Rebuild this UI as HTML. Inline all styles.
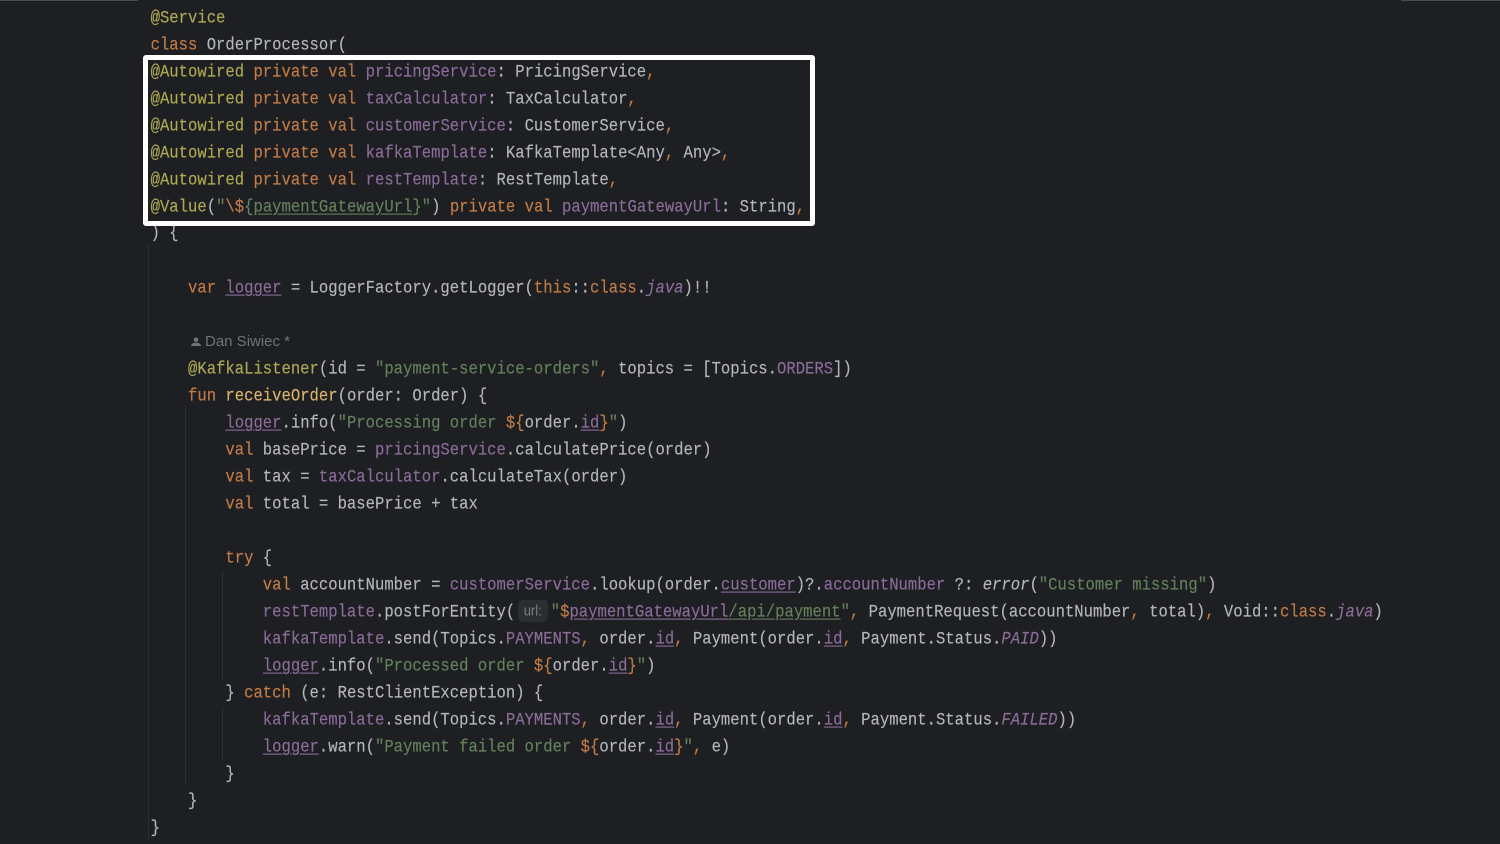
<!DOCTYPE html>
<html><head><meta charset="utf-8"><style>
html,body{margin:0;padding:0;width:1500px;height:844px;overflow:hidden;background:#1e1f22}
body{position:relative}
.bar{position:absolute;top:0;height:1px;background:#4a4b4f}
.g{position:absolute;width:1px;background:#2c2e32}
#code{position:absolute;left:0;top:0;width:1500px;height:844px;overflow:hidden;filter:blur(.35px)}
.l{position:absolute;margin-top:1px;margin-left:-.4px;white-space:pre;font:15.58px/27px "Liberation Mono",monospace;color:#b4b6bc;height:27px;transform:scaleY(1.1);transform-origin:center;-webkit-text-stroke:.15px currentColor}
.k{color:#c07c45}.a{color:#aca94f}.p{color:#8a6c99}.s{color:#64805c}.c{color:#c07c45}
.f{color:#d9b36c}.u{text-decoration:underline;text-underline-offset:2px}.i{font-style:italic}
.box{position:absolute;left:143px;top:55px;width:662px;height:161px;border:5px solid #fff;border-radius:3px}
.hint{display:inline-block;width:35.5px;height:22px;position:relative;vertical-align:top}
.hint b{position:absolute;left:2.5px;top:2px;width:30px;height:20px;background:#2b2d30;border-radius:4px;color:#7a7e85;font:400 13px/20px "Liberation Sans",sans-serif;text-align:center;-webkit-text-stroke:0}
.auth{position:absolute;left:205px;top:332px;font:15px/20px "Liberation Sans",sans-serif;color:#6f737a;white-space:pre}
</style></head><body>
<div class="bar" style="left:0;width:138px"></div>
<div class="bar" style="left:1401px;width:99px"></div>
<div class="g" style="left:148px;top:245px;height:595px"></div>
<div class="g" style="left:185px;top:405px;height:380px"></div>
<div class="g" style="left:222px;top:571px;height:109px"></div>
<div class="g" style="left:222px;top:706px;height:54px"></div>
<div id="code">
<div class="l" style="left:151px;top:4px"><span class="a">@Service</span></div>
<div class="l" style="left:151px;top:31px"><span class="k">class</span> OrderProcessor(</div>
<div class="l" style="left:151px;top:58px"><span class="a">@Autowired</span> <span class="k">private val</span> <span class="p">pricingService</span>: PricingService<span class="c">,</span></div>
<div class="l" style="left:151px;top:85px"><span class="a">@Autowired</span> <span class="k">private val</span> <span class="p">taxCalculator</span>: TaxCalculator<span class="c">,</span></div>
<div class="l" style="left:151px;top:112px"><span class="a">@Autowired</span> <span class="k">private val</span> <span class="p">customerService</span>: CustomerService<span class="c">,</span></div>
<div class="l" style="left:151px;top:139px"><span class="a">@Autowired</span> <span class="k">private val</span> <span class="p">kafkaTemplate</span>: KafkaTemplate&lt;Any<span class="c">,</span> Any&gt;<span class="c">,</span></div>
<div class="l" style="left:151px;top:166px"><span class="a">@Autowired</span> <span class="k">private val</span> <span class="p">restTemplate</span>: RestTemplate<span class="c">,</span></div>
<div class="l" style="left:151px;top:193px"><span class="a">@Value</span>(<span class="s">"</span><span class="k">\$</span><span class="s">{</span><span class="s u">paymentGatewayUrl</span><span class="s">}"</span>) <span class="k">private val</span> <span class="p">paymentGatewayUrl</span>: String<span class="c">,</span></div>
<div class="l" style="left:151px;top:219px">) {</div>
<div class="l" style="left:188.4px;top:274px"><span class="k">var</span> <span class="p u">logger</span> = LoggerFactory.getLogger(<span class="k">this</span>::<span class="k">class</span>.<span class="p i">java</span>)!!</div>
<svg style="position:absolute;left:190px;top:336px" width="12" height="12" viewBox="0 0 12 12"><circle cx="6" cy="3.8" r="2.3" fill="#6f737a"/><path d="M1 10c0-2.4 2.4-3.3 5-3.3s5 .9 5 3.3z" fill="#6f737a"/></svg>
<div class="auth">Dan Siwiec *</div>
<div class="l" style="left:188.4px;top:355px"><span class="a">@KafkaListener</span>(id = <span class="s">"payment-service-orders"</span><span class="c">,</span> topics = [Topics.<span class="p">ORDERS</span>])</div>
<div class="l" style="left:188.4px;top:382px"><span class="k">fun</span> <span class="f">receiveOrder</span>(order: Order) {</div>
<div class="l" style="left:225.8px;top:409px"><span class="p u">logger</span>.info(<span class="s">"Processing order </span><span class="k">${</span>order.<span class="p u">id</span><span class="k">}</span><span class="s">"</span>)</div>
<div class="l" style="left:225.8px;top:436px"><span class="k">val</span> basePrice = <span class="p">pricingService</span>.calculatePrice(order)</div>
<div class="l" style="left:225.8px;top:463px"><span class="k">val</span> tax = <span class="p">taxCalculator</span>.calculateTax(order)</div>
<div class="l" style="left:225.8px;top:490px"><span class="k">val</span> total = basePrice + tax</div>
<div class="l" style="left:225.8px;top:544px"><span class="k">try</span> {</div>
<div class="l" style="left:263.2px;top:571px"><span class="k">val</span> accountNumber = <span class="p">customerService</span>.lookup(order.<span class="p u">customer</span>)?.<span class="p">accountNumber</span> ?: <span class="i">error</span>(<span class="s">"Customer missing"</span>)</div>
<div class="l" style="left:263.2px;top:598px"><span class="p">restTemplate</span>.postForEntity(<span class="hint"><b>url:</b></span><span class="s">"</span><span class="k">$</span><span class="p u">paymentGatewayUrl</span><span class="s u">/api/payment</span><span class="s">"</span><span class="c">,</span> PaymentRequest(accountNumber<span class="c">,</span> total)<span class="c">,</span> Void::<span class="k">class</span>.<span class="p i">java</span>)</div>
<div class="l" style="left:263.2px;top:625px"><span class="p">kafkaTemplate</span>.send(Topics.<span class="p">PAYMENTS</span><span class="c">,</span> order.<span class="p u">id</span><span class="c">,</span> Payment(order.<span class="p u">id</span><span class="c">,</span> Payment.Status.<span class="p i">PAID</span>))</div>
<div class="l" style="left:263.2px;top:652px"><span class="p u">logger</span>.info(<span class="s">"Processed order </span><span class="k">${</span>order.<span class="p u">id</span><span class="k">}</span><span class="s">"</span>)</div>
<div class="l" style="left:225.8px;top:679px">} <span class="k">catch</span> (e: RestClientException) {</div>
<div class="l" style="left:263.2px;top:706px"><span class="p">kafkaTemplate</span>.send(Topics.<span class="p">PAYMENTS</span><span class="c">,</span> order.<span class="p u">id</span><span class="c">,</span> Payment(order.<span class="p u">id</span><span class="c">,</span> Payment.Status.<span class="p i">FAILED</span>))</div>
<div class="l" style="left:263.2px;top:733px"><span class="p u">logger</span>.warn(<span class="s">"Payment failed order </span><span class="k">${</span>order.<span class="p u">id</span><span class="k">}</span><span class="s">"</span><span class="c">,</span> e)</div>
<div class="l" style="left:225.8px;top:760px">}</div>
<div class="l" style="left:188.4px;top:787px">}</div>
<div class="l" style="left:151px;top:814px">}</div>
</div>
<div class="box"></div>
</body></html>
